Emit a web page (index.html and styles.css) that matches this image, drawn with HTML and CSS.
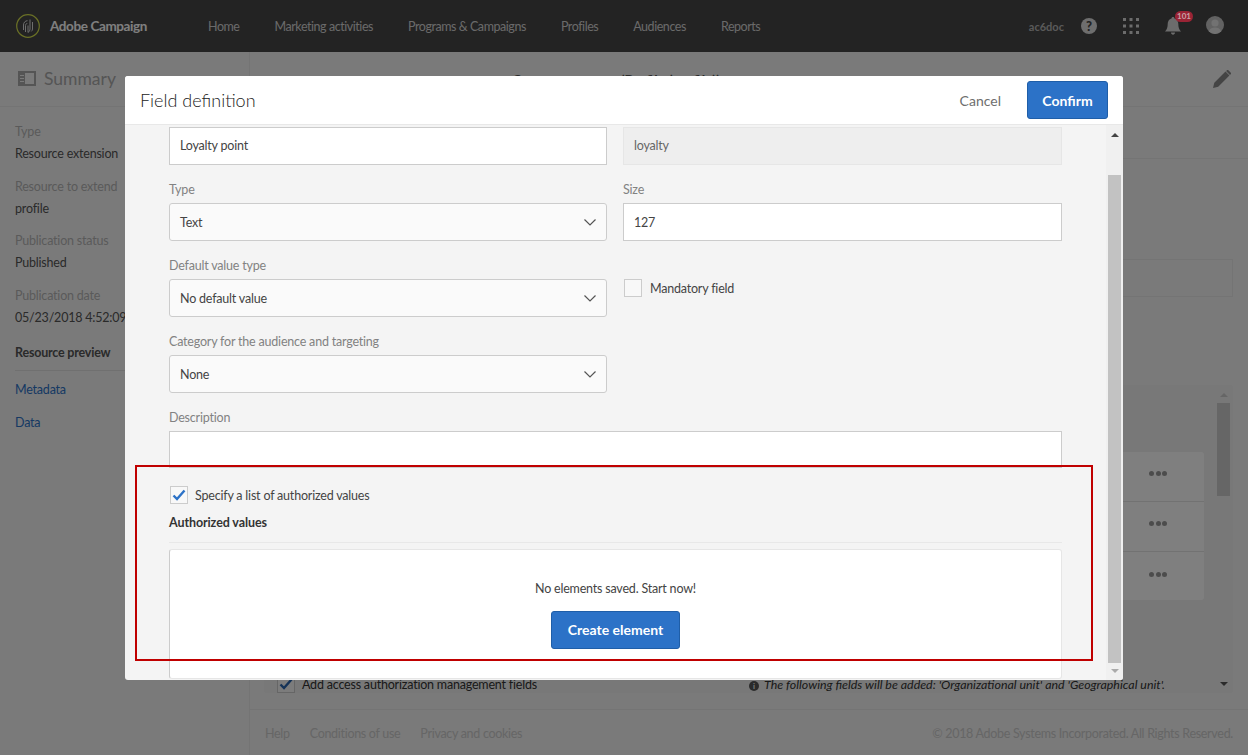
FILE: index.html
```html
<!DOCTYPE html>
<html lang="en">
<head>
    <meta charset="UTF-8">
    <title>Adobe Campaign - Field definition</title>
    <link rel="stylesheet" href="styles.css">
</head>
<body>
    <header class="topbar">
        <div class="brand">
            <svg class="brand-logo" width="24" height="24" viewBox="0 0 24 24" fill="none">
                <circle cx="12" cy="12" r="11.3" stroke="#d4e04c" stroke-width="1.2"/>
                <path d="M7.5 16V11c0-2.500 1.800-4.300 4-4.300M9.500 18V11.500c0-1.200.8-2 1.800-2M12 18.500V11.500M14 5.500V15c0 1.500-.8 2.700-2 3.500M16.500 8v7c0 1-.5 1.800-1.200 2.400" stroke="#ddd" stroke-width="1"/>
            </svg>
            <span>Adobe Campaign</span>
        </div>
        <nav class="mainnav">
            <a>Home</a>
            <a>Marketing activities</a>
            <a>Programs &amp; Campaigns</a>
            <a>Profiles</a>
            <a>Audiences</a>
            <a>Reports</a>
        </nav>
        <div class="toptools">
            <span class="org">ac6doc</span>
            <span class="help-icon">?</span>
            <svg class="apps-icon" width="16" height="16" viewBox="0 0 16 16" fill="#d8d8d8">
                <rect x="0" y="0" width="3" height="3"/><rect x="6.5" y="0" width="3" height="3"/><rect x="13" y="0" width="3" height="3"/>
                <rect x="0" y="6.5" width="3" height="3"/><rect x="6.5" y="6.5" width="3" height="3"/><rect x="13" y="6.5" width="3" height="3"/>
                <rect x="0" y="13" width="3" height="3"/><rect x="6.5" y="13" width="3" height="3"/><rect x="13" y="13" width="3" height="3"/>
            </svg>
            <span class="bell">
                <svg width="16" height="18" viewBox="0 0 16 18" fill="#d8d8d8">
                    <path d="M8 0c1 0 1.500.7 1.500 1.500C12 2.300 13.300 4.500 13.300 7c0 3.500.8 5.500 2.700 7.500H0C1.900 12.500 2.700 10.500 2.700 7c0-2.500 1.300-4.700 3.800-5.500C6.500.7 7 0 8 0zM6 15.500h4c0 1.300-.9 2.200-2 2.200s-2-.9-2-2.200z"/>
                </svg>
                <b class="bell-count">101</b>
            </span>
            <svg class="avatar" width="18" height="18" viewBox="0 0 18 18">
                <circle cx="9" cy="9" r="9" fill="#c4c4c4"/>
                <circle cx="9" cy="7" r="3.6" fill="#e4e4e4"/>
                <path d="M2.800 15.500C4 12.300 6.300 11.500 9 11.500s5 .8 6.200 4A9 9 0 0 1 2.800 15.500z" fill="#e4e4e4"/>
            </svg>
        </div>
    </header>

    <div class="page">
        <aside class="sidebar">
            <div class="sidebar-head">
                <svg width="18" height="15" viewBox="0 0 18 15" fill="none" stroke="#aaa">
                    <rect x="1" y="1" width="16" height="13" stroke-width="2"/>
                    <path d="M1 2h6v11H1z" fill="#aaa" stroke="none"/>
                    <path d="M2 4.500h4M2 7.500h4M2 10.500h4" stroke="#f4f4f4" stroke-width="1"/>
                </svg>
                <span>Summary</span>
            </div>
            <dl class="meta">
                <dt>Type</dt><dd>Resource extension</dd>
                <dt>Resource to extend</dt><dd>profile</dd>
                <dt>Publication status</dt><dd>Published</dd>
                <dt>Publication date</dt><dd>05/23/2018 4:52:09 PM</dd>
            </dl>
            <div class="preview-title">Resource preview</div>
            <a class="side-link">Metadata</a>
            <a class="side-link">Data</a>
        </aside>
        <main class="content">
            <div class="content-head">
                <h1>Custom resource (Profile (profile))</h1>
                <svg class="pencil" width="20" height="20" viewBox="0 0 20 20" fill="#888">
                    <path d="M1 19l1.300-5.200L13.500 2.600l3.900 3.900L6.200 17.700zM14.700 1.400c.6-.6 1.300-.6 1.900 0l2 2c.6.6.6 1.300 0 1.900l-.6.600-3.900-3.900z"/>
                </svg>
            </div>
            <div class="content-tabs"></div>
            <div class="band"></div>
            <div class="panel">
                <div class="rows">
                    <div class="row"><span class="dots"><i></i><i></i><i></i></span></div>
                    <div class="row"><span class="dots"><i></i><i></i><i></i></span></div>
                    <div class="row"><span class="dots"><i></i><i></i><i></i></span></div>
                </div>
                <div class="panel-bar">
                    <span class="arrow-up panel-up"></span>
                    <span class="panel-thumb"></span>
                    <span class="arrow-down panel-down"></span>
                </div>
                <div class="access">
                    <span class="check check-back">
                        <svg width="14" height="12" viewBox="0 0 14 12" fill="none" stroke="#2a66b0" stroke-width="2.4"><path d="M1.500 6.500l3.500 3.500 7.500-8.500"/></svg>
                    </span>
                    <span class="access-label">Add access authorization management fields</span>
                    <em class="access-note"><b class="info">i</b>The following fields will be added: 'Organizational unit' and 'Geographical unit'.</em>
                </div>
            </div>
            <footer class="footer">
                <a>Help</a>
                <a>Conditions of use</a>
                <a>Privacy and cookies</a>
                <span class="copy">&copy; 2018 Adobe Systems Incorporated. All Rights Reserved.</span>
            </footer>
        </main>
    </div>

    <div class="backdrop"></div>

    <section class="modal">
        <div class="modal-head">
            <h2>Field definition</h2>
            <a class="cancel">Cancel</a>
            <button class="btn confirm">Confirm</button>
        </div>
        <div class="modal-body">
            <div class="form">
                <div class="form-grid">
                    <div class="field field-first">
                        <div class="input">Loyalty point</div>
                    </div>
                    <div class="field field-first">
                        <div class="input input-off">loyalty</div>
                    </div>
                    <div class="field">
                        <label>Type</label>
                        <div class="select">Text<svg class="chev" width="12" height="7" viewBox="0 0 12 7" fill="none" stroke="#555" stroke-width="1.2"><path d="M.5.5L6 6 11.500.5"/></svg></div>
                    </div>
                    <div class="field">
                        <label>Size</label>
                        <div class="input">127</div>
                    </div>
                    <div class="field">
                        <label>Default value type</label>
                        <div class="select">No default value<svg class="chev" width="12" height="7" viewBox="0 0 12 7" fill="none" stroke="#555" stroke-width="1.2"><path d="M.5.5L6 6 11.500.5"/></svg></div>
                    </div>
                    <div class="field field-check">
                        <span class="check"></span>
                        <span class="check-label">Mandatory field</span>
                    </div>
                    <div class="field">
                        <label>Category for the audience and targeting</label>
                        <div class="select">None<svg class="chev" width="12" height="7" viewBox="0 0 12 7" fill="none" stroke="#555" stroke-width="1.2"><path d="M.5.5L6 6 11.500.5"/></svg></div>
                    </div>
                    <div class="field"></div>
                </div>
                <div class="field desc">
                    <label>Description</label>
                    <div class="input textarea"></div>
                </div>
                <div class="auth-toggle">
                    <span class="check">
                        <svg width="14" height="12" viewBox="0 0 14 12" fill="none" stroke="#2c72c7" stroke-width="2.4"><path d="M1.500 6.500l3.500 3.500 7.500-8.500"/></svg>
                    </span>
                    <span class="check-label">Specify a list of authorized values</span>
                </div>
                <h3>Authorized values</h3>
                <div class="empty-box">
                    <p>No elements saved. Start now!</p>
                    <button class="btn create">Create element</button>
                </div>
            </div>
            <div class="scrollbar">
                <span class="arrow-up"></span>
                <span class="thumb"></span>
                <span class="arrow-down"></span>
            </div>
        </div>
        <div class="highlight"></div>
    </section>
</body>
</html>
```

FILE: styles.css
```css
* {
    box-sizing: border-box;
}
html, body {
    height: 100%;
}
body {
    margin: 0;
    height: 755px;
    overflow: hidden;
    font-family: 'Lato', 'Open Sans', sans-serif;
    font-size: 12.5px;
    letter-spacing: -0.2px;
    color: #333;
    background-color: #f4f4f4;
}
a {
    text-decoration: none;
}

/* top bar */
.topbar {
    display: flex;
    align-items: center;
    height: 52px;
    padding: 0 24px 0 16px;
    background-color: #464646;
    color: #ccc;
}
.brand {
    display: flex;
    align-items: center;
    gap: 10px;
    width: 192px;
    font-size: 13.5px;
    font-weight: 700;
    letter-spacing: -0.4px;
    color: #fff;
}
.mainnav {
    display: flex;
    gap: 35px;
    letter-spacing: -0.45px;
}
.mainnav a {
    color: #d4d4d4;
}
.toptools {
    display: flex;
    align-items: center;
    margin-left: auto;
}
.org {
    font-size: 11px;
    font-weight: 700;
    letter-spacing: 0;
    color: #b4b4b4;
    margin-right: 17px;
}
.help-icon {
    width: 16px;
    height: 16px;
    border-radius: 50%;
    background-color: #dcdcdc;
    color: #464646;
    font-size: 13px;
    font-weight: 900;
    line-height: 16px;
    text-align: center;
    margin-right: 26px;
}
.apps-icon {
    margin-right: 26px;
}
.bell {
    position: relative;
    display: flex;
    margin-right: 25px;
}
.bell-count {
    position: absolute;
    z-index: 1;
    top: -6px;
    left: 10px;
    width: 18px;
    height: 11px;
    border-radius: 6px;
    background-color: #9a2435;
    color: #c9a3a8;
    font-size: 8px;
    letter-spacing: 0;
    line-height: 11px;
    text-align: center;
}
.avatar {
    margin-top: -2px;
}

/* page behind the dialog */
.page {
    display: flex;
    height: 703px;
}
.sidebar {
    width: 250px;
    flex: none;
    border-right: 1px solid #e8e8e8;
}
.sidebar-head {
    display: flex;
    align-items: center;
    gap: 8px;
    height: 55px;
    padding: 0 18px 2px;
    border-bottom: 1px solid #e8e8e8;
    font-size: 17.5px;
    letter-spacing: 0;
    color: #aaa;
}
.meta {
    margin: 16px 0 0;
    padding: 0 15px;
}
.meta dt {
    color: #b4b4b4;
    line-height: 18px;
}
.meta dd {
    margin: 4px 0 14.5px;
    line-height: 18px;
    color: #555;
    white-space: nowrap;
}
.preview-title {
    margin: 18px 15px 0;
    padding-bottom: 10px;
    border-bottom: 1px solid #e0e0e0;
    font-weight: 700;
    color: #555;
}
.side-link {
    display: block;
    margin: 15px 15px 0;
    line-height: 18px;
    color: #2c72c7;
}
.preview-title + .side-link {
    margin-top: 10px;
}
.content {
    flex: 1;
    min-width: 0;
}
.content-head {
    display: flex;
    align-items: center;
    height: 55px;
    padding: 0 16px 0 262px;
    border-bottom: 1px solid #e8e8e8;
}
.content-head h1 {
    margin: 0;
    font-size: 14px;
    font-weight: 700;
    letter-spacing: 0;
    color: #555;
}
.pencil {
    margin-left: auto;
}
.content-tabs {
    height: 52px;
    border-bottom: 1px solid #e8e8e8;
}
.band {
    height: 38px;
    margin: 100px 15px 0;
    border: 1px solid #e8e8e8;
}
.panel {
    position: relative;
    height: 308px;
    margin: 88px 15px 0 14px;
    padding: 67px 29px 0 0;
    border-radius: 3px;
    background-color: #f0f0f0;
}
.rows {
    margin-left: 13px;
    height: 148px;
    border-radius: 3px;
    background-color: #fff;
}
.row {
    display: flex;
    align-items: center;
    justify-content: flex-end;
    height: 50px;
    padding-right: 37px;
    border-bottom: 1px solid #e4e4e4;
}
.row:last-child {
    border-bottom: none;
}
.dots {
    display: flex;
    gap: 1.5px;
    margin-top: -6px;
}
.dots i {
    width: 5px;
    height: 5px;
    border-radius: 50%;
    background-color: #999;
}
.panel-bar {
    position: absolute;
    top: 0;
    right: 3px;
    bottom: 0;
    display: flex;
    flex-direction: column;
    align-items: center;
    width: 13px;
}
.panel-thumb {
    display: block;
    width: 13px;
    height: 93px;
    background-color: #ccc;
}
.arrow-up.panel-up {
    margin: 8px 0 6px;
    border-bottom-color: #ccc;
}
.arrow-down.panel-down {
    margin-top: 186px;
    border-top-color: #555;
}
.access {
    display: flex;
    align-items: center;
    height: 18px;
    margin: 75px 0 0 13px;
}
.check-back {
    margin-right: 7px;
}
.access-label {
    color: #333;
    width: 447px;
}
.access-note {
    font-size: 12.4px;
    letter-spacing: 0;
    color: #333;
}
.info {
    display: inline-block;
    width: 10px;
    height: 10px;
    margin-right: 5px;
    border-radius: 50%;
    background-color: #555;
    color: #f2f2f2;
    font-size: 8px;
    line-height: 10px;
    text-align: center;
    font-style: normal;
}
.footer {
    display: flex;
    gap: 20px;
    align-items: center;
    height: 46px;
    margin-top: 16px;
    padding: 2px 15px 0;
    border-top: 1px solid #e8e8e8;
    letter-spacing: -0.3px;
    color: #ccc;
}
.copy {
    margin-left: auto;
}

.backdrop {
    position: absolute;
    top: 0;
    left: 0;
    right: 0;
    bottom: 0;
    background-color: rgba(0, 0, 0, 0.5);
}

/* dialog */
.modal {
    position: absolute;
    top: 76px;
    left: 125px;
    width: 998px;
    height: 604px;
    border-radius: 3px;
    background-color: #f4f4f4;
    overflow: hidden;
}
.modal-head {
    display: flex;
    align-items: center;
    height: 49px;
    padding: 0 15px;
    border-bottom: 1px solid #e8e8e8;
    background-color: #fff;
}
.modal-head h2 {
    margin: 0;
    font-size: 18px;
    font-weight: 300;
    letter-spacing: 0;
    color: #222;
}
.cancel {
    margin-left: auto;
    margin-right: 26px;
    font-size: 14px;
    letter-spacing: 0;
    color: #6e6e6e;
}
.btn {
    border: 1px solid #1f5ea8;
    border-radius: 3px;
    background-color: #2c72c7;
    color: #fff;
    font-family: inherit;
    font-size: 14px;
    font-weight: 700;
}
.confirm {
    width: 81px;
    height: 38px;
}
.modal-body {
    display: flex;
    height: 555px;
    overflow: hidden;
}
.form {
    flex: 1;
    min-width: 0;
    padding: 2px 44px 0 44px;
}
.form-grid {
    display: grid;
    grid-template-columns: 438px 439px;
    column-gap: 16px;
}
.field {
    height: 76px;
}
.field-first {
    height: 54px;
}
.field-first .input {
    padding-bottom: 2px;
}
.field label {
    display: block;
    height: 22px;
    line-height: 17px;
    color: #828282;
}
.input, .select {
    display: flex;
    align-items: center;
    height: 38px;
    padding: 0 10px;
    border: 1px solid #ccc;
    background-color: #fff;
    color: #444;
}
.input-off {
    border-color: #e6e6e6;
    background-color: #eee;
    color: #666;
}
.select {
    justify-content: space-between;
    border-radius: 3px;
    background-color: #fafafa;
}
.textarea {
    height: 37px;
}
.field-check {
    display: flex;
    align-items: flex-start;
    gap: 8px;
    padding: 22px 0 0 1px;
}
.check {
    display: flex;
    align-items: center;
    justify-content: center;
    width: 18px;
    height: 18px;
    flex: none;
    border: 1px solid #ccc;
    background-color: #f8f8f8;
}
.check-label {
    padding-top: 1px;
    line-height: 18px;
    color: #444;
}
.desc {
    height: auto;
}
.auth-toggle {
    display: flex;
    align-items: center;
    gap: 7px;
    margin: 18px 0 0 1px;
    height: 18px;
}
.modal h3 {
    margin: 10px 0 0;
    padding-bottom: 11px;
    border-bottom: 1px solid #e8e8e8;
    font-size: 12.5px;
    font-weight: 700;
    letter-spacing: -0.1px;
    line-height: 17px;
    color: #333;
}
.empty-box {
    height: 130px;
    margin-top: 6px;
    padding-top: 30px;
    border: 1px solid #e6e6e6;
    border-left-color: #ccc;
    border-radius: 3px;
    background-color: #fff;
    text-align: center;
}
.empty-box p {
    margin: 0 0 13px;
    line-height: 18px;
    color: #444;
}
.create {
    width: 129px;
    height: 38px;
    padding-bottom: 3px;
}
.scrollbar {
    display: flex;
    flex-direction: column;
    align-items: center;
    width: 17px;
    flex: none;
    background-color: #f0f0f0;
}
.arrow-up, .arrow-down {
    width: 0;
    height: 0;
    border-left: 4px solid transparent;
    border-right: 4px solid transparent;
}
.arrow-up {
    margin: 8px 0 38px;
    border-bottom: 4px solid #444;
}
.arrow-down {
    margin-top: 6px;
    border-top: 4px solid #aaa;
}
.thumb {
    align-self: flex-start;
    width: 13px;
    height: 488px;
    margin-left: 2px;
    background-color: #c2c2c2;
}

.highlight {
    position: absolute;
    top: 389px;
    left: 10px;
    width: 958px;
    height: 196px;
    border: 2px solid #c00000;
    pointer-events: none;
}
```
